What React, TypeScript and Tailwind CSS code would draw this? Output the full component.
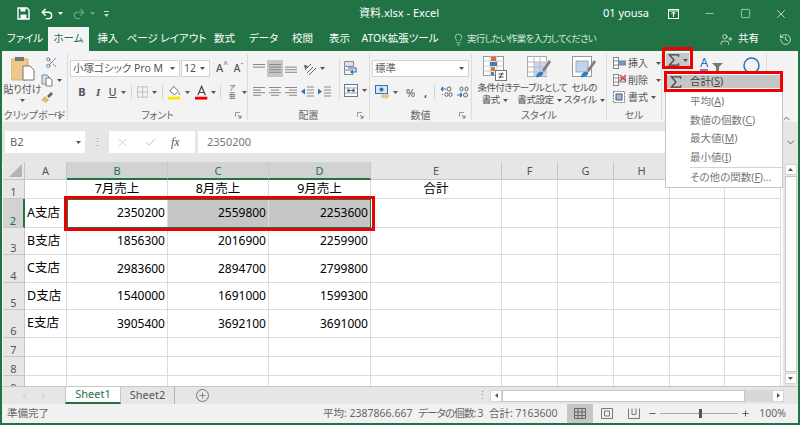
import { Fragment, type ReactNode } from 'react';
import { Undo2, Redo2, Lightbulb, UserPlus, History, Minus, Square, X, Scissors, Check, ChevronUp, ChevronDown, Plus, ChevronLeft, ChevronRight } from 'lucide-react';

const tabs = [
  { label: 'ファイル', w: 'w-[46px]' },
  { label: 'ホーム', w: 'w-[41px]', active: true },
  { label: '挿入', w: 'w-[38px]' },
  { label: 'ページ レイアウト', w: 'w-[79px]' },
  { label: '数式', w: 'w-[37px]' },
  { label: 'データ', w: 'w-[41px]' },
  { label: '校閲', w: 'w-[37px]' },
  { label: '表示', w: 'w-[37px]' },
  { label: 'ATOK拡張ツール', w: 'w-[84px]' },
];

const columns = ['B', 'C', 'D', 'E', 'F', 'G', 'H', 'I', 'J'];

const rows = [
  { n: 1, h: 'h-[19px]', cells: ['', '7月売上', '8月売上', '9月売上', '合計'] },
  { n: 2, h: 'h-[29px]', cells: ['A支店', '2350200', '2559800', '2253600', ''] },
  { n: 3, h: 'h-[27px]', cells: ['B支店', '1856300', '2016900', '2259900', ''] },
  { n: 4, h: 'h-[28px]', cells: ['C支店', '2983600', '2894700', '2799800', ''] },
  { n: 5, h: 'h-[27px]', cells: ['D支店', '1540000', '1691000', '1599300', ''] },
  { n: 6, h: 'h-[28px]', cells: ['E支店', '3905400', '3692100', '3691000', ''] },
  { n: 7, h: 'h-[19px]', cells: ['', '', '', '', ''] },
  { n: 8, h: 'h-[19px]', cells: ['', '', '', '', ''] },
  { n: 9, h: 'h-[19px]', cells: ['', '', '', '', ''] },
];

const menuItems = [
  { label: '平均', key: 'A', top: 'h-[19px]' },
  { label: '数値の個数', key: 'C', top: 'h-[19px]' },
  { label: '最大値', key: 'M', top: 'h-[18px]' },
  { label: '最小値', key: 'I', top: 'h-[19px]' },
];

function Chev({ className = '' }: { className?: string }) {
  return (
    <svg width="5" height="3" viewBox="0 0 5 3" className={`shrink-0 ${className}`}>
      <path d="M0 0h5L2.5 3z" fill="#555" />
    </svg>
  );
}

function Launcher() {
  return (
    <svg width="7" height="7" viewBox="0 0 7 7" className="shrink-0">
      <path d="M.5 5V.5H5" fill="none" stroke="#999" />
      <path d="M3 3l3 3M6 3.5V6H3.5" fill="none" stroke="#777" />
    </svg>
  );
}

function Lines({ aligns, active = false, lead }: { aligns: [number, number][]; active?: boolean; lead?: ReactNode }) {
  return (
    <div className={`flex h-[17px] w-[16px] items-center justify-center ${active ? 'bg-[#c6c6c6]' : ''}`}>
      <svg width="14" height="12" viewBox="0 0 14 12">
        {aligns.map(([x, w], i) => (
          <rect key={i} x={x} y={i * 2.6 + 1} width={w} height="1" fill="#888" />
        ))}
        {lead}
      </svg>
    </div>
  );
}

function Group({ w, label, launcher, children }: { w: string; label: string; launcher?: boolean; children: ReactNode }) {
  return (
    <div className={`flex h-[66px] shrink-0 flex-col border-r border-[#dcdcdc] ${w}`}>
      <div className="min-h-0 flex-1">{children}</div>
      <div className="relative flex h-[11px] items-center justify-center whitespace-nowrap text-[10px] leading-none text-[#666]">
        {label}
        {launcher && (
          <span className="absolute right-[5px] top-[3px]">
            <Launcher />
          </span>
        )}
      </div>
    </div>
  );
}

function Sigma({ className = '' }: { className?: string }) {
  return (
    <svg width="12" height="12" viewBox="0 0 13 13" className={className}>
      <path d="M11.5 3V1H1.5L6.5 6.5L1.5 12H11.5V10" fill="none" stroke="#444" strokeWidth="1.4" />
    </svg>
  );
}

function PasteIcon() {
  return (
    <svg width="24" height="25" viewBox="0 0 24 25">
      <rect x="0" y="3" width="17" height="21" rx="1" fill="#edc78b" stroke="#d9b070" />
      <rect x="4" y="1" width="9" height="4" fill="#777" />
      <path d="M12 10h7l4 4v10H12z" fill="#fff" stroke="#777" />
    </svg>
  );
}

function CopyIcon() {
  return (
    <svg width="12" height="13" viewBox="0 0 12 13">
      <path d="M1 1h5l2 2v7H1z" fill="#d5e3f1" stroke="#7a8a9a" />
      <path d="M5 4h4l2 2v6H5z" fill="#fff" stroke="#777" />
    </svg>
  );
}

function BrushIcon() {
  return (
    <svg width="12" height="12" viewBox="0 0 12 12">
      <path d="M0 8l4-4 4 4-3 3z" fill="#e5b96f" />
      <path d="M6 4l4-4 2 2-4 4z" fill="#666" />
    </svg>
  );
}

function CondIcon() {
  return (
    <svg width="24" height="25" viewBox="0 0 24 25">
      <rect x=".5" y=".5" width="20" height="19" fill="#fff" stroke="#999" />
      <path d="M7 .5v19M14 .5v19M.5 5h20M.5 10h20M.5 15h20" stroke="#ccc" />
      <rect x="8" y="1" width="5" height="4" fill="#e36c32" />
      <rect x="7" y="6" width="7" height="4" fill="#3b7fc4" />
      <rect x="8" y="11" width="4" height="4" fill="#e36c32" />
      <rect x="8" y="16" width="3" height="3" fill="#3b7fc4" />
      <rect x="12.5" y="14.5" width="11" height="10" fill="#fff" stroke="#777" />
      <path d="M15.5 18h5M15.5 21h5M19.5 16.5l-3 6" stroke="#444" fill="none" />
    </svg>
  );
}

function TableIcon() {
  return (
    <svg width="25" height="25" viewBox="0 0 25 25">
      <rect x=".5" y=".5" width="19" height="20" fill="#fff" stroke="#aaa" />
      <rect x="7" y="6" width="13" height="14" fill="#c6d7ec" />
      <path d="M7 .5v20M13 .5v20M.5 6h19M.5 11h19M.5 16h19" stroke="#bbb" />
      <path d="M15 14l7-10 2 2-7 10z" fill="#7f7f7f" />
      <path d="M9 21c0-4 4-6 7-5 1 3-3 6-7 5z" fill="#2f7fc4" />
    </svg>
  );
}

function CellStyleIcon() {
  return (
    <svg width="25" height="25" viewBox="0 0 25 25">
      <rect x=".5" y=".5" width="19" height="20" fill="#fff" stroke="#999" />
      <rect x="4" y="5" width="12" height="11" fill="#c0d5ec" stroke="#9ab" />
      <path d="M15 14l7-10 2 2-7 10z" fill="#7f7f7f" />
      <path d="M9 21c0-4 4-6 7-5 1 3-3 6-7 5z" fill="#2f7fc4" />
    </svg>
  );
}

function RowsIcon({ kind }: { kind: 'insert' | 'delete' | 'format' }) {
  return (
    <svg width="15" height="14" viewBox="0 0 15 14" className="shrink-0">
      {kind === 'format' ? (
        <>
          <rect x="1.5" y="1.5" width="11" height="11" fill="#fff" stroke="#777" strokeDasharray="2 1" />
          <rect x="4" y="4" width="6" height="6" fill="#9dbbdc" stroke="#557" />
        </>
      ) : (
        <>
          <rect x="1.5" y="1.5" width="5" height="11" fill="#fff" stroke="#888" />
          <path d="M1.5 5h5M1.5 9h5" stroke="#888" />
          <rect x="6.5" y="5" width="7" height="4" fill={kind === 'insert' ? '#6a9bd0' : '#ddd'} stroke="#789" />
          {kind === 'delete' && <path d="M8 2l6 6M14 2l-6 6" stroke="#e0483a" strokeWidth="1.6" />}
        </>
      )}
    </svg>
  );
}

export default function App() {
  const ribbonText = 'text-[10px] leading-[12px] text-[#555]';
  return (
    <div className="relative flex h-[425px] w-[800px] flex-col overflow-hidden border-x-2 border-b-2 border-[#217346] bg-[#e6e6e6] text-[#444] [font-family:'Noto_Sans','Noto_Sans_CJK_JP',sans-serif] [font-feature-settings:'palt']">
      {/* title bar */}
      <div className="relative -mx-[2px] flex h-[27px] shrink-0 items-center bg-[#217346] text-white">
        <div className="ml-[17px] flex items-center">
          <svg width="13" height="13" viewBox="0 0 13 13">
            <path d="M1 1h9l2 2v9H1z" fill="none" stroke="#fff" strokeWidth="1.4" />
            <rect x="3.5" y="1" width="5" height="3.5" fill="#fff" />
            <rect x="3.5" y="7.5" width="6" height="4.5" fill="#fff" />
          </svg>
          <Undo2 size={14} strokeWidth={2.4} className="ml-[10px]" />
          <svg width="5" height="3" viewBox="0 0 5 3" className="ml-[4px]"><path d="M0 0h5L2.5 3z" fill="#fff" /></svg>
          <Redo2 size={14} strokeWidth={2} className="ml-[9px] text-[#6fa58a]" />
          <svg width="5" height="3" viewBox="0 0 5 3" className="ml-[4px]"><path d="M0 0h5L2.5 3z" fill="#6fa58a" /></svg>
          <svg width="5" height="6" viewBox="0 0 5 6" className="ml-[9px]"><path d="M0 0h5v1H0zM0 3h5L2.5 6z" fill="#c5d9cd" /></svg>
        </div>
        <div className="absolute left-[359px] top-[6px] text-[11px] leading-[14px]">資料.xlsx - Excel</div>
        <div className="ml-auto flex items-center">
          <span className="text-[11px]">01 yousa</span>
          <svg width="11" height="10" viewBox="0 0 11 10" className="ml-[19px]">
            <rect x=".5" y=".5" width="10" height="9" fill="none" stroke="#fff" />
            <path d="M5.5 8V3M3.5 5l2-2 2 2M.5 2h10" fill="none" stroke="#fff" />
          </svg>
          <Minus size={13} strokeWidth={1} className="ml-[24px]" />
          <Square size={11} strokeWidth={1.2} className="ml-[24px]" />
          <X size={14} strokeWidth={1.2} className="ml-[23px] mr-[12px]" />
        </div>
      </div>

      {/* tabs */}
      <div className="-mx-[2px] flex h-[24px] shrink-0 items-end bg-[#217346] pl-[2px] text-[10.5px] text-white">
        {tabs.map((t) => (
          <div
            key={t.label}
            className={`flex h-[24px] shrink-0 items-center justify-center whitespace-nowrap ${t.w} ${t.active ? 'bg-[#f3f3f3] text-[#217346]' : ''}`}
          >
            {t.label}
          </div>
        ))}
        <div className="ml-[10px] flex h-[24px] items-center text-[#d7e6dd]">
          <Lightbulb size={13} strokeWidth={1.3} />
          <span className="ml-[2px] whitespace-nowrap text-[9.5px] tracking-[-0.8px]">実行したい作業を入力してください</span>
        </div>
        <div className="ml-auto flex h-[24px] items-center">
          <UserPlus size={13} strokeWidth={1.3} />
          <span className="ml-[5px] mr-[20px]">共有</span>
          <History size={13} strokeWidth={1.3} className="mr-[8px]" />
        </div>
      </div>

      {/* ribbon */}
      <div className="flex h-[71px] shrink-0 items-start bg-[#f3f3f3] pt-[3px]">
        <Group w="w-[66px]" label="クリップボード" launcher>
          <div className="flex h-full">
            <div className="flex w-[38px] flex-col items-center pl-[3px] pt-[2px]">
              <PasteIcon />
              <span className="mt-[2px] whitespace-nowrap text-[10px] leading-[12px] text-[#555]">貼り付け</span>
              <Chev className="mt-[4px]" />
            </div>
            <div className="flex flex-col items-center pl-[1px] pt-[2px]">
              <Scissors size={13} className="text-[#4a6f9a]" strokeWidth={1.4} />
              <div className="mt-[5px] flex items-center">
                <CopyIcon />
                <Chev className="ml-[4px]" />
              </div>
              <div className="mt-[5px] -ml-[9px]">
                <BrushIcon />
              </div>
            </div>
          </div>
        </Group>

        <Group w="w-[180px]" label="フォント" launcher>
          <div className="flex pl-[2px] pt-[6px]">
            <div className="flex h-[17px] w-[112px] items-center justify-between border border-[#d4d4d4] bg-white pl-[2px] pr-[4px] text-[10.5px] text-[#555]">
              <span className="whitespace-nowrap">小塚ゴシック Pro M</span>
              <Chev />
            </div>
            <div className="ml-[1px] flex h-[17px] w-[29px] items-center justify-between border border-[#d4d4d4] bg-white pl-[2px] pr-[4px] text-[10.5px] text-[#555]">
              12
              <Chev />
            </div>
            <span className="ml-[4px] flex w-[17px] items-center justify-center text-[11px] font-medium text-[#555]">A<sup className="text-[#3b7fc4]">^</sup></span>
            <span className="flex w-[17px] items-center justify-center text-[10px] font-medium text-[#555]">A<sup className="text-[#3b7fc4]">ˇ</sup></span>
          </div>
          <div className="mt-[6px] flex h-[18px] items-center pl-[6px] text-[11px] text-[#555]">
            <span className="w-[17px] text-center font-bold">B</span>
            <span className="w-[17px] text-center italic [font-family:'Liberation_Serif',serif] font-bold">I</span>
            <span className="w-[14px] text-center font-medium underline">U</span>
            <Chev className="ml-[2px]" />
            <span className="ml-[5px] h-[14px] w-px bg-[#d4d4d4]" />
            <svg width="12" height="12" viewBox="0 0 12 12" className="ml-[5px]">
              <path d="M.5.5h11v11H.5zM6 .5v11M.5 6h11" fill="none" stroke="#bbb" />
            </svg>
            <Chev className="ml-[4px]" />
            <span className="ml-[5px] h-[14px] w-px bg-[#d4d4d4]" />
            <svg width="14" height="15" viewBox="0 0 14 15" className="ml-[5px]">
              <path d="M6 1l5 5-4 4-5-4z" fill="#fff" stroke="#666" />
              <path d="M12 7l1 2.5h-2z" fill="#3b7fc4" />
              <rect y="12" width="13" height="3" fill="#ffe600" />
            </svg>
            <Chev className="ml-[3px]" />
            <svg width="14" height="15" viewBox="0 0 14 15" className="ml-[5px]">
              <path d="M3 10.5L7 1l4 9.5M4.5 7.5h5" fill="none" stroke="#444" strokeWidth="1.3" />
              <rect y="12" width="13" height="3" fill="#f00000" />
            </svg>
            <Chev className="ml-[3px]" />
            <span className="ml-[4px] h-[14px] w-px bg-[#d4d4d4]" />
            <span className="ml-[6px] w-[12px] text-center text-[7px] leading-[8px] text-[#666]">ア<br />亜</span>
            <Chev className="ml-[4px]" />
          </div>
        </Group>

        <Group w="w-[122px]" label="配置" launcher>
          <div className="flex h-full">
            <div className="w-[91px] pl-[3px] pt-[6px]">
              <div className="flex h-[17px] items-center">
                <Lines aligns={[[1, 12], [1, 12]]} />
                <Lines aligns={[[1, 12], [1, 12], [1, 12], [1, 12]]} active />
                <Lines aligns={[[1, 0], [1, 12], [1, 12], [1, 12]]} />
                <svg width="14" height="14" viewBox="0 0 14 14" className="ml-[4px]">
                  <path d="M2 8l6-6M4 11l6-6M6 13l7-7" fill="none" stroke="#666" />
                  <path d="M1 3l4 1-3 3z" fill="#555" />
                </svg>
                <Chev className="ml-[3px]" />
              </div>
              <div className="mt-[6px] flex h-[18px] items-center">
                <Lines aligns={[[1, 12], [1, 8], [1, 12], [1, 8]]} />
                <Lines aligns={[[1, 12], [3, 8], [1, 12], [3, 8]]} />
                <Lines aligns={[[1, 12], [5, 8], [1, 12], [5, 8]]} />
                <svg width="13" height="12" viewBox="0 0 13 12" className="ml-[2px]">
                  <path d="M6 1h7M6 4h7M6 7h7M6 10h7" stroke="#888" />
                  <path d="M0 5.5L4 2.5v6z" fill="#2f6fb5" />
                </svg>
                <svg width="13" height="12" viewBox="0 0 13 12" className="ml-[4px]">
                  <path d="M6 1h7M6 4h7M6 7h7M6 10h7" stroke="#888" />
                  <path d="M4 5.5L0 2.5v6z" fill="#2f6fb5" />
                </svg>
              </div>
            </div>
            <span className="mt-[4px] h-[42px] w-px bg-[#dcdcdc]" />
            <div className="pl-[4px] pt-[7px]">
              <svg width="14" height="15" viewBox="0 0 14 15">
                <path d="M.5.5h9v5h-9zM.5 9h9" fill="#d7e3f0" stroke="#888" />
                <path d="M.5 5.5v8h9" fill="none" stroke="#888" />
                <path d="M4 7h8v4H7M9 9.5L7 11l2 1.5" fill="none" stroke="#2f6fb5" strokeWidth="1.2" />
              </svg>
              <div className="mt-[8px] flex items-center">
                <svg width="14" height="13" viewBox="0 0 14 13">
                  <rect x=".5" y=".5" width="13" height="12" fill="#fff" stroke="#777" />
                  <path d="M.5 4h13M.5 9h13" stroke="#999" />
                  <path d="M3 6.5h8M3 6.5l2-1.5v3zM11 6.5L9 5v3z" fill="#2f6fb5" stroke="#2f6fb5" />
                </svg>
                <Chev className="ml-[4px]" />
              </div>
            </div>
          </div>
        </Group>

        <Group w="w-[102px]" label="数値" launcher>
          <div className="pl-[2px] pt-[6px]">
            <div className="flex h-[17px] w-[97px] items-center justify-between border border-[#d4d4d4] bg-white pl-[2px] pr-[4px] text-[10.5px] text-[#666]">
              標準
              <Chev />
            </div>
            <div className="mt-[6px] flex h-[18px] items-center pl-[3px] text-[#555]">
              <svg width="15" height="14" viewBox="0 0 15 14">
                <rect x=".5" y=".5" width="12" height="8" fill="#d7e3f0" stroke="#2f6fb5" />
                <circle cx="6.5" cy="4.5" r="2" fill="#2f6fb5" />
                <ellipse cx="10" cy="11" rx="4" ry="2.6" fill="#e8c68c" />
              </svg>
              <Chev className="ml-[3px]" />
              <span className="ml-[8px] w-[10px] text-[11px] leading-none">%</span>
              <span className="ml-[8px] w-[6px] text-[11px] font-bold leading-none">,</span>
              <span className="ml-[4px] h-[14px] w-px bg-[#d4d4d4]" />
              <svg width="12" height="13" viewBox="0 0 12 13" className="ml-[6px]">
                <path d="M0 3h5M0 3l2-2M0 3l2 2" fill="none" stroke="#2f6fb5" strokeWidth="1.2" />
                <circle cx="8" cy="3" r="2" fill="none" stroke="#666" />
                <path d="M1 8.5h1M4 8.5a1.5 2 0 1 0 3 0a1.5 2 0 1 0-3 0M8 8.5a1.5 2 0 1 0 3 0a1.5 2 0 1 0-3 0" fill="none" stroke="#666" />
              </svg>
              <svg width="12" height="13" viewBox="0 0 12 13" className="ml-[4px]">
                <path d="M3 3a1.5 2 0 1 0 3 0a1.5 2 0 1 0-3 0M8 3a1.5 2 0 1 0 3 0a1.5 2 0 1 0-3 0" fill="none" stroke="#666" />
                <path d="M0 9h5M5 9l-2-2M5 9l-2 2" fill="none" stroke="#2f6fb5" strokeWidth="1.2" />
                <circle cx="8.5" cy="9" r="2" fill="none" stroke="#666" />
              </svg>
            </div>
          </div>
        </Group>

        <Group w="w-[135px]" label="スタイル">
          <div className="flex pl-[1px] pt-[2px]">
            {[
              { icon: <CondIcon />, a: '条件付き', b: '書式', w: 'w-[44px]' },
              { icon: <TableIcon />, a: 'テーブルとして', b: '書式設定', w: 'w-[46px]' },
              { icon: <CellStyleIcon />, a: 'セルの', b: 'スタイル', w: 'w-[44px]' },
            ].map((s) => (
              <div key={s.a} className={`flex flex-col items-center ${s.w} ${ribbonText}`}>
                <div className="h-[25px]">{s.icon}</div>
                <span className="mt-[1px] whitespace-nowrap text-[9.5px] tracking-[-0.6px]">{s.a}</span>
                <span className="flex items-center whitespace-nowrap text-[9.5px] tracking-[-0.4px]">
                  {s.b}
                  <Chev className="ml-[3px]" />
                </span>
              </div>
            ))}
          </div>
        </Group>

        <Group w="w-[55px]" label="セル">
          <div className={`flex flex-col gap-[3px] pl-[5px] pt-[2px] ${ribbonText}`}>
            {[
              { k: 'insert' as const, t: '挿入', m: 'ml-[8px]' },
              { k: 'delete' as const, t: '削除', m: 'ml-[8px]' },
              { k: 'format' as const, t: '書式', m: 'ml-[3px]' },
            ].map((c) => (
              <div key={c.k} className="flex h-[14px] items-center">
                <RowsIcon kind={c.k} />
                <span className="ml-[1px] whitespace-nowrap">{c.t}</span>
                <Chev className={c.m} />
              </div>
            ))}
          </div>
        </Group>

        <div className="flex h-[66px] w-[105px] shrink-0 flex-col border-r border-[#dcdcdc]">
          <div className="flex items-start pl-[4px]">
            <div className="-mt-[1px] flex h-[14px] w-[23px] items-center justify-center gap-[3px] bg-[#c6c6c6]">
              <Sigma />
              <Chev />
            </div>
            <div className="ml-[11px] mt-[3px] flex flex-col items-center">
              <span className="text-[13px] leading-[11px] text-[#2f6fb5]">A</span>
              <span className="mt-[1px] h-[2px] w-[8px] bg-[#a06bc0]" />
            </div>
            <svg width="11" height="8" viewBox="0 0 11 8" className="ml-[4px] mt-[9px]">
              <path d="M0 0h11L7 4v4H4V4z" fill="#777" />
            </svg>
            <svg width="17" height="17" viewBox="0 0 17 17" className="ml-[20px] mt-[3px]">
              <circle cx="8.5" cy="8.5" r="7.5" fill="none" stroke="#2f6fb5" strokeWidth="1.5" />
            </svg>
          </div>
        </div>
        <ChevronUp size={11} strokeWidth={2} className="mt-[59px] ml-[14px] text-[#555]" />
      </div>

      {/* formula bar */}
      <div className="mt-[9px] flex h-[22px] shrink-0 items-stretch pl-[3px]">
        <div className="flex w-[80px] items-center justify-between bg-white pl-[5px] pr-[4px] text-[11px] text-[#666]">
          B2
          <Chev />
        </div>
        <div className="flex w-[24px] items-center justify-center text-[11px] text-[#999]">⋮</div>
        <div className="flex w-[86px] items-center bg-white pl-[7px] text-[#bbb]">
          <X size={13} strokeWidth={1.3} />
          <Check size={13} strokeWidth={1.6} className="ml-[15px]" />
          <span className="ml-[14px] text-[12px] italic text-[#555] [font-family:'Liberation_Serif',serif]">fx</span>
        </div>
        <div className="ml-[3px] flex flex-1 items-center bg-white pl-[9px] text-[11px] text-[#777]">2350200</div>
        <div className="flex w-[15px] items-center justify-center">
          <ChevronDown size={11} strokeWidth={2} className="text-[#555]" />
        </div>
      </div>

      {/* sheet */}
      <div className="relative mt-[9px] flex min-h-0 flex-1">
        <div className="min-h-0 w-[781px] overflow-hidden bg-white pl-[1px]">
          <div className="grid w-[780px] grid-cols-[22px_42px_101px_101px_102px_131px_56px_56px_56px_55px_56px] text-[12.5px] leading-none text-black">
            <div className="flex h-[18px] items-end justify-end border-r border-b border-[#c6c6c6] bg-[#e6e6e6] pb-[2px] pr-[2px]">
              <svg width="13" height="13" viewBox="0 0 13 13"><path d="M13 0v13H0z" fill="#b4b4b4" /></svg>
            </div>
            <div className="flex h-[18px] items-center justify-center border-r border-b border-[#c6c6c6] bg-[#e6e6e6] text-[11px] text-[#555]">A</div>
            {columns.map((c, i) => (
              <div
                key={c}
                className={`flex h-[18px] items-center justify-center border-r border-[#c6c6c6] text-[11px] ${
                  i < 3 ? 'border-b-2 border-b-[#217346] bg-[#d2d2d2] text-[#217346]' : 'border-b bg-[#e6e6e6] text-[#555]'
                }`}
              >
                {c}
              </div>
            ))}
            {rows.map((r) => (
              <Fragment key={r.n}>
                <div
                  className={`flex items-end justify-center border-b border-[#c6c6c6] pb-[1px] text-[11px] ${r.h} ${
                    r.n === 2 ? 'border-r-2 border-r-[#217346] bg-[#d2d2d2] text-[#217346]' : 'border-r bg-[#e6e6e6] text-[#555]'
                  }`}
                >
                  {r.n}
                </div>
                {r.cells.map((v, i) => {
                  const sel = r.n === 2 && (i === 2 || i === 3);
                  const isNum = /^\d+$/.test(v);
                  const isHead = r.n === 1;
                  return (
                    <div
                      key={i}
                      className={`flex items-center overflow-hidden border-r border-b border-[#dcdcdc] px-[2px] ${r.h} ${
                        isNum ? 'justify-end text-[12px]' : isHead ? 'justify-center' : 'justify-start'
                      } ${sel ? 'bg-[#c6c6c6]' : ''}`}
                    >
                      {v}
                    </div>
                  );
                })}
                {columns.slice(4).map((c) => (
                  <div key={c} className={`border-r border-b border-[#dcdcdc] ${r.h}`} />
                ))}
              </Fragment>
            ))}
          </div>
          {/* selection outline */}
          <div className="pointer-events-none absolute left-[65px] top-[37px] h-[29px] w-[304px] border border-[#217346]" />
        </div>
        <div className="flex w-[15px] flex-col items-center justify-between bg-[#e6e6e6] py-[2px]">
          <div className="flex h-[11px] w-[12px] items-center justify-center border border-[#d4d4d4] bg-white">
            <svg width="5" height="3" viewBox="0 0 5 3"><path d="M0 3h5L2.5 0z" fill="#555" /></svg>
          </div>
          <div className="my-[1px] w-[12px] flex-1 border border-[#c6c6c6] bg-white" />
          <div className="flex h-[11px] w-[12px] items-center justify-center border border-[#d4d4d4] bg-white">
            <Chev />
          </div>
        </div>
      </div>

      {/* sheet tabs */}
      <div className="flex h-[18px] shrink-0 items-stretch border-t border-[#c6c6c6] bg-[#e6e6e6] text-[11px]">
        <div className="flex w-[63px] items-center justify-center gap-[10px] text-[#bbb]">
          <ChevronLeft size={9} strokeWidth={2} />
          <ChevronRight size={9} strokeWidth={2} />
        </div>
        <div className="flex w-[56px] items-center justify-center border-x border-b-2 border-[#c6c6c6] border-b-[#217346] bg-white text-[#217346]">Sheet1</div>
        <div className="flex w-[54px] items-center justify-center border-r border-[#b4b4b4] text-[#555]">Sheet2</div>
        <div className="ml-[20px] flex w-[14px] items-center justify-center">
          <span className="flex h-[13px] w-[13px] items-center justify-center rounded-full border border-[#777]">
            <Plus size={9} strokeWidth={1.6} className="text-[#555]" />
          </span>
        </div>
        <div className="ml-[270px] flex w-[6px] items-center justify-center text-[#999]">⋮</div>
        <div className="ml-[5px] flex w-[294px] items-center py-[2px]">
          <div className="flex h-[12px] w-[12px] items-center justify-center border border-[#d4d4d4] bg-white">
            <svg width="3" height="5" viewBox="0 0 3 5"><path d="M3 0v5L0 2.5z" fill="#555" /></svg>
          </div>
          <div className="h-[12px] w-[243px] border border-[#c6c6c6] bg-white" />
          <div className="h-[12px] flex-1 bg-[#d8d8d8]" />
          <div className="flex h-[12px] w-[12px] items-center justify-center border border-[#d4d4d4] bg-white">
            <svg width="3" height="5" viewBox="0 0 3 5"><path d="M0 0v5L3 2.5z" fill="#555" /></svg>
          </div>
        </div>
      </div>

      {/* status bar */}
      <div className="flex h-[19px] shrink-0 items-stretch whitespace-nowrap bg-[#f1f1f1] text-[10.5px] text-[#666]">
        <div className="flex w-[321px] items-center pl-[5px]">準備完了</div>
        <div className="flex w-[95px] items-center">平均: 2387866.667</div>
        <div className="flex w-[71px] items-center tracking-[-0.8px]">データの個数: 3</div>
        <div className="flex items-center">合計: 7163600</div>
        <div className="ml-auto flex items-center pr-[12px]">
          <div className="flex h-[19px] w-[26px] items-center justify-center bg-[#c6c6c6]">
            <svg width="12" height="11" viewBox="0 0 12 11"><path d="M.5.5h11v10H.5zM4 .5v10M8 .5v10M.5 4h11M.5 7.5h11" fill="none" stroke="#666" /></svg>
          </div>
          <svg width="12" height="11" viewBox="0 0 12 11" className="ml-[8px]"><path d="M.5.5h11v10H.5z" fill="none" stroke="#777" /><path d="M3.5 3h5v5h-5z" fill="none" stroke="#777" /></svg>
          <svg width="12" height="11" viewBox="0 0 12 11" className="ml-[15px]"><path d="M.5.5v10h11V.5M4 .5v6h4V.5" fill="none" stroke="#777" /></svg>
          <Minus size={9} strokeWidth={2.5} className="ml-[8px] text-[#555]" />
          <div className="mx-[3px] flex h-[11px] w-[78px] items-center">
            <span className="h-px w-[39px] bg-[#aaa]" />
            <span className="h-[9px] w-[3px] bg-[#555]" />
            <span className="h-px flex-1 bg-[#aaa]" />
          </div>
          <Plus size={9} strokeWidth={2.5} className="text-[#555]" />
          <span className="ml-[9px]">100%</span>
        </div>
      </div>

      {/* sum dropdown */}
      <div className="absolute left-[663px] top-[71px] h-[117px] w-[118px] border border-[#c6c6c6] bg-white text-[10.5px] text-[#777]">
        <div className="mx-[1px] mb-[4px] mt-[3px] flex h-[13px] items-center bg-[#c6c6c6] text-[#444]">
          <Sigma className="ml-[3px]" />
          <span className="ml-[8px]">合計(<span className="underline">S</span>)</span>
        </div>
        {menuItems.map((m) => (
          <div key={m.key} className={`flex items-center pl-[24px] ${m.top}`}>
            <span>
              {m.label}(<span className="underline">{m.key}</span>)
            </span>
          </div>
        ))}
        <div className="ml-[24px] h-px bg-[#d4d4d4]" />
        <div className="flex h-[20px] items-center pl-[24px]">
          <span>
            その他の関数(<span className="underline">F</span>)...
          </span>
        </div>
      </div>

      {/* red callouts */}
      <div className="pointer-events-none absolute left-[660px] top-[47px] h-[22px] w-[31px] border-[3px] border-[#f00000]" />
      <div className="pointer-events-none absolute left-[662px] top-[71px] h-[21px] w-[119px] border-[3px] border-[#f00000]" />
      <div className="pointer-events-none absolute left-[62px] top-[196px] h-[35px] w-[311px] border-[3px] border-[#f00000]" />
    </div>
  );
}
